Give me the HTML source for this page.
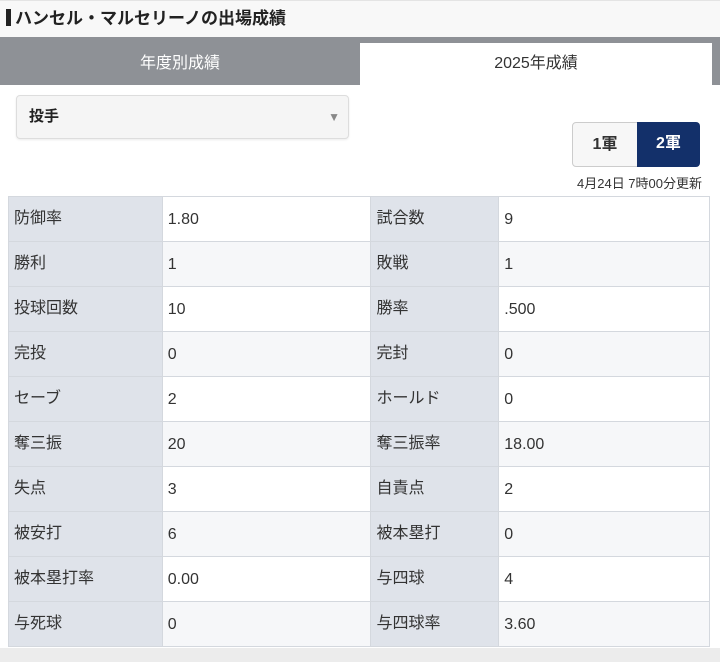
<!DOCTYPE html>
<html><head><meta charset="utf-8"><style>
*{box-sizing:border-box;margin:0;padding:0}
body{width:720px;height:662px;background:#fff;font-family:"Liberation Sans","Noto Sans CJK JP",sans-serif;color:#333;position:relative;overflow:hidden}
.title{position:absolute;left:0;top:0;width:720px;height:37px;background:#f8f8f8;border-top:1px solid #e4e4e4;font-size:17px;font-weight:bold;line-height:36px;padding-left:6px;color:#222}
.title:before{content:"";display:inline-block;width:5px;height:17px;background:#222;vertical-align:-2px;margin-right:4px}
.tabs{position:absolute;left:0;top:37px;width:720px;height:48px;background:#8e9196}
.tab1{position:absolute;left:0;top:6px;width:360px;height:42px;line-height:42px;text-align:center;color:#fff;font-size:16px}
.tab2{position:absolute;left:360px;top:6px;width:352px;height:42px;line-height:42px;text-align:center;color:#333;font-size:16px;background:#fff}
.sel{position:absolute;left:16px;top:95px;width:333px;height:44px;background:#f5f5f5;border:1px solid #ddd;border-radius:4px;box-shadow:0 1px 2px rgba(0,0,0,.08);font-size:15px;font-weight:bold;line-height:42px;padding-left:12px;color:#222}
.sel span{position:absolute;right:8px;top:0;color:#888;font-size:12px}
.btn{position:absolute;top:122px;height:45px;line-height:43px;font-size:16px;font-weight:bold;text-align:center}
.b1{left:572px;width:66px;background:#f7f7f7;border:1px solid #ccc;border-radius:4px 0 0 4px;color:#333}
.b2{left:637px;width:63px;background:#13306a;color:#fff;border-radius:0 4px 4px 0}
.upd{position:absolute;right:18px;top:173px;font-size:13px;color:#333}
table{position:absolute;left:8px;top:196px;width:702px;border-collapse:collapse;font-size:16px}
td{height:45px;border:1px solid #d4d8de;padding:0 0 0 5px;color:#333;vertical-align:middle}
td div{height:22px;line-height:22px;overflow:hidden}
td.v div{padding-top:1px}
td.l{background:#dfe3ea}
tr:nth-child(even) td.v{background:#f6f7f9}
.bot{position:absolute;left:0;top:648px;width:720px;height:14px;background:#ececec}
</style></head><body>
<div class="title">ハンセル・マルセリーノの出場成績</div>
<div class="tabs"><div class="tab1">年度別成績</div><div class="tab2">2025年成績</div></div>
<div class="sel">投手<span>▼</span></div>
<div class="btn b1">1軍</div><div class="btn b2">2軍</div>
<div class="upd">4月24日 7時00分更新</div>
<table>
<colgroup><col style="width:154px"><col style="width:209px"><col style="width:128px"><col style="width:211px"></colgroup>
<tr><td class="l"><div>防御率</div></td><td class="v"><div>1.80</div></td><td class="l"><div>試合数</div></td><td class="v"><div>9</div></td></tr>
<tr><td class="l"><div>勝利</div></td><td class="v"><div>1</div></td><td class="l"><div>敗戦</div></td><td class="v"><div>1</div></td></tr>
<tr><td class="l"><div>投球回数</div></td><td class="v"><div>10</div></td><td class="l"><div>勝率</div></td><td class="v"><div>.500</div></td></tr>
<tr><td class="l"><div>完投</div></td><td class="v"><div>0</div></td><td class="l"><div>完封</div></td><td class="v"><div>0</div></td></tr>
<tr><td class="l"><div>セーブ</div></td><td class="v"><div>2</div></td><td class="l"><div>ホールド</div></td><td class="v"><div>0</div></td></tr>
<tr><td class="l"><div>奪三振</div></td><td class="v"><div>20</div></td><td class="l"><div>奪三振率</div></td><td class="v"><div>18.00</div></td></tr>
<tr><td class="l"><div>失点</div></td><td class="v"><div>3</div></td><td class="l"><div>自責点</div></td><td class="v"><div>2</div></td></tr>
<tr><td class="l"><div>被安打</div></td><td class="v"><div>6</div></td><td class="l"><div>被本塁打</div></td><td class="v"><div>0</div></td></tr>
<tr><td class="l"><div>被本塁打率</div></td><td class="v"><div>0.00</div></td><td class="l"><div>与四球</div></td><td class="v"><div>4</div></td></tr>
<tr><td class="l"><div>与死球</div></td><td class="v"><div>0</div></td><td class="l"><div>与四球率</div></td><td class="v"><div>3.60</div></td></tr>
</table>
<div class="bot"></div>
</body></html>
